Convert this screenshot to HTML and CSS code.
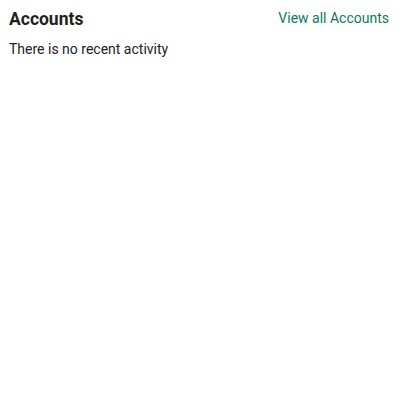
FILE: index.html
```html
<!DOCTYPE html>
<html>
<head>
<meta charset="utf-8">
<link rel="stylesheet" href="styles.css">
</head>
<body>
<section class="card">
  <div class="header">
    <h2 class="title">Accounts</h2>
    <a class="link" href="#">View all Accounts</a>
  </div>
  <p class="empty">There is no recent activity</p>
</section>
</body>
</html>
```
FILE: styles.css
```css
html, body {
  margin: 0;
  padding: 0;
  background: #fff;
}
body {
  font-family: Roboto, "Noto Sans", sans-serif;
  color: #212121;
}
.card {
  padding: 8px 14px 0 9px;
}
.header {
  display: flex;
  justify-content: space-between;
  align-items: flex-start;
}
.title {
  margin: 0;
  font-size: 17.5px;
  font-weight: 700;
  line-height: 22px;
  color: #1f1f1f;
}
.link {
  font-size: 14px;
  line-height: 20px;
  color: #0a7a5c;
  text-decoration: none;
}
.empty {
  margin: 9px 0 0;
  font-size: 14px;
  line-height: 20px;
  color: #212121;
}
```
